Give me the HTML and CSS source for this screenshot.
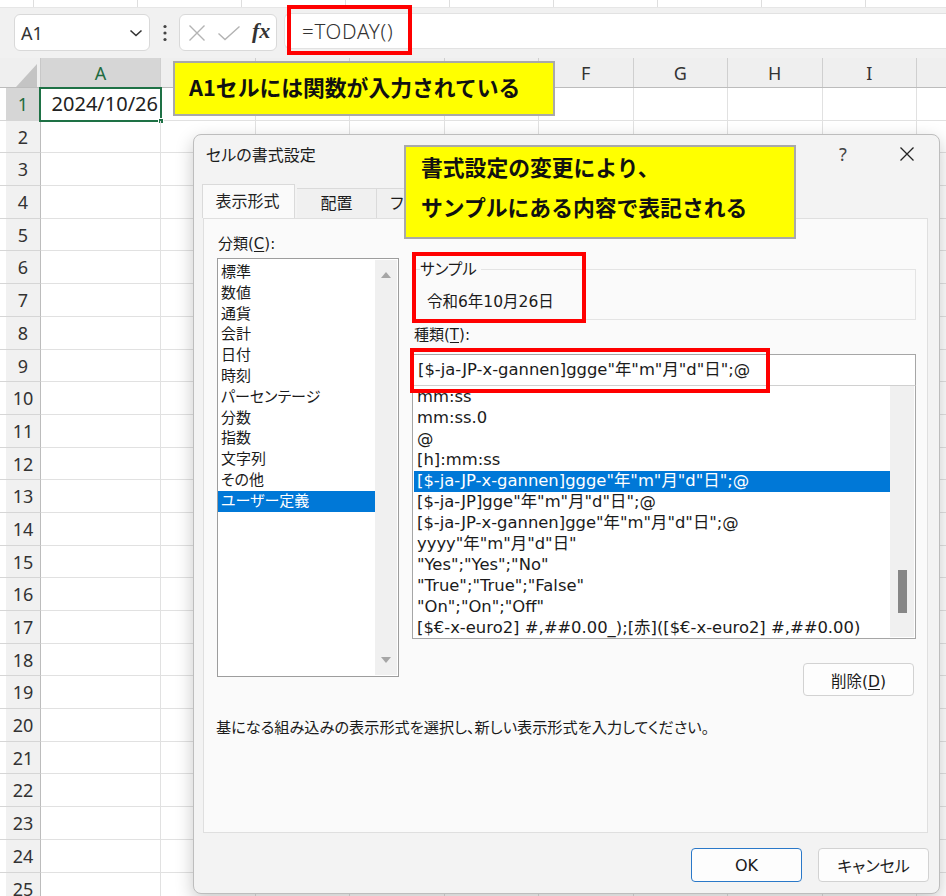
FILE: index.html
```html
<!DOCTYPE html>
<html lang="ja">
<head>
<meta charset="utf-8">
<title>セルの書式設定</title>
<link rel="stylesheet" href="styles.css">
</head>
<body>
<div class="app">
  <div class="topstrip"></div>
  <div class="fbar">
    <div class="namebox">
      <span>A1</span>
      <svg class="chev" width="14" height="8" viewBox="0 0 14 8"><path d="M1.5 1.5 L7 6.5 L12.5 1.5" fill="none" stroke="#333" stroke-width="1.6"/></svg>
    </div>
    <div class="dots">
      <svg width="4" height="18" viewBox="0 0 4 18"><circle cx="2" cy="2.5" r="1.6" fill="#444"/><circle cx="2" cy="9" r="1.6" fill="#444"/><circle cx="2" cy="15.5" r="1.6" fill="#444"/></svg>
    </div>
    <div class="fxgroup">
      <svg width="18" height="18" viewBox="0 0 18 18"><path d="M1.5 1.5 L16.5 16.5 M16.5 1.5 L1.5 16.5" stroke="#b3b3b3" stroke-width="1.4" fill="none"/></svg>
      <svg width="24" height="16" viewBox="0 0 24 16"><path d="M1.5 8.5 L8 14.5 L22.5 1.5" stroke="#b3b3b3" stroke-width="1.4" fill="none"/></svg>
      <span class="fx">fx</span>
    </div>
    <div class="finput">=TODAY()</div>
  </div>

  <div class="sheet">
    <div class="hrow">
      <div class="corner"><svg width="41" height="30" viewBox="0 0 41 30"><polygon points="16,29 37,6 37,29" fill="#c4c4c4"/></svg></div>
      <div class="ch ch-a sel">A</div>
      <div class="ch">B</div><div class="ch">C</div><div class="ch">D</div><div class="ch">E</div>
      <div class="ch">F</div><div class="ch">G</div><div class="ch">H</div><div class="ch">I</div><div class="ch">J</div>
    </div>
    <div class="row"><div class="rh sel">1</div><div class="ca"><div class="active">2024/10/26<span class="handle"></span></div></div><div class="rest"></div></div>
    <div class="row"><div class="rh">2</div><div class="ca"></div><div class="rest"></div></div>
    <div class="row"><div class="rh">3</div><div class="ca"></div><div class="rest"></div></div>
    <div class="row"><div class="rh">4</div><div class="ca"></div><div class="rest"></div></div>
    <div class="row"><div class="rh">5</div><div class="ca"></div><div class="rest"></div></div>
    <div class="row"><div class="rh">6</div><div class="ca"></div><div class="rest"></div></div>
    <div class="row"><div class="rh">7</div><div class="ca"></div><div class="rest"></div></div>
    <div class="row"><div class="rh">8</div><div class="ca"></div><div class="rest"></div></div>
    <div class="row"><div class="rh">9</div><div class="ca"></div><div class="rest"></div></div>
    <div class="row"><div class="rh">10</div><div class="ca"></div><div class="rest"></div></div>
    <div class="row"><div class="rh">11</div><div class="ca"></div><div class="rest"></div></div>
    <div class="row"><div class="rh">12</div><div class="ca"></div><div class="rest"></div></div>
    <div class="row"><div class="rh">13</div><div class="ca"></div><div class="rest"></div></div>
    <div class="row"><div class="rh">14</div><div class="ca"></div><div class="rest"></div></div>
    <div class="row"><div class="rh">15</div><div class="ca"></div><div class="rest"></div></div>
    <div class="row"><div class="rh">16</div><div class="ca"></div><div class="rest"></div></div>
    <div class="row"><div class="rh">17</div><div class="ca"></div><div class="rest"></div></div>
    <div class="row"><div class="rh">18</div><div class="ca"></div><div class="rest"></div></div>
    <div class="row"><div class="rh">19</div><div class="ca"></div><div class="rest"></div></div>
    <div class="row"><div class="rh">20</div><div class="ca"></div><div class="rest"></div></div>
    <div class="row"><div class="rh">21</div><div class="ca"></div><div class="rest"></div></div>
    <div class="row"><div class="rh">22</div><div class="ca"></div><div class="rest"></div></div>
    <div class="row"><div class="rh">23</div><div class="ca"></div><div class="rest"></div></div>
    <div class="row"><div class="rh">24</div><div class="ca"></div><div class="rest"></div></div>
    <div class="row"><div class="rh">25</div><div class="ca"></div><div class="rest"></div></div>
  </div>

  <div class="dialog">
    <div class="titlebar">
      <span class="title">セルの書式設定</span>
      <span class="help">?</span>
      <span class="close"><svg width="16" height="16" viewBox="0 0 16 16"><path d="M1.5 1.5 L14.5 14.5 M14.5 1.5 L1.5 14.5" stroke="#222" stroke-width="1.3" fill="none"/></svg></span>
    </div>
    <div class="tabs">
      <div class="tab active">表示形式</div>
      <div class="tab">配置</div>
      <div class="tab">フォント</div>
    </div>
    <div class="panel">
      <div class="cols">
        <div class="leftcol">
          <div class="label">分類(<u>C</u>):</div>
          <div class="list1">
            <div class="items">
              <div class="item">標準</div>
              <div class="item">数値</div>
              <div class="item">通貨</div>
              <div class="item">会計</div>
              <div class="item">日付</div>
              <div class="item">時刻</div>
              <div class="item">パーセンテージ</div>
              <div class="item">分数</div>
              <div class="item">指数</div>
              <div class="item">文字列</div>
              <div class="item">その他</div>
              <div class="item selected">ユーザー定義</div>
            </div>
            <div class="vscroll">
              <svg width="22" height="12" viewBox="0 0 22 12"><polygon points="6,10 16,10 11,4" fill="#a6a6a6"/></svg>
              <svg width="22" height="12" viewBox="0 0 22 12"><polygon points="6,2 16,2 11,8" fill="#a6a6a6"/></svg>
            </div>
          </div>
        </div>
        <div class="rightcol">
          <div class="sample">
            <span class="legend">サンプル</span>
            <div class="sample-value">令和6年10月26日</div>
          </div>
          <div class="label kind-label">種類(<u>T</u>):</div>
          <div class="kind-input">[$-ja-JP-x-gannen]ggge"年"m"月"d"日";@</div>
          <div class="list2">
            <div class="items2">
              <div class="item">mm:ss</div>
              <div class="item">mm:ss.0</div>
              <div class="item">@</div>
              <div class="item">[h]:mm:ss</div>
              <div class="item selected">[$-ja-JP-x-gannen]ggge"年"m"月"d"日";@</div>
              <div class="item">[$-ja-JP]gge"年"m"月"d"日";@</div>
              <div class="item">[$-ja-JP-x-gannen]gge"年"m"月"d"日";@</div>
              <div class="item">yyyy"年"m"月"d"日"</div>
              <div class="item">"Yes";"Yes";"No"</div>
              <div class="item">"True";"True";"False"</div>
              <div class="item">"On";"On";"Off"</div>
              <div class="item">[$€-x-euro2] #,##0.00_);[赤]([$€-x-euro2] #,##0.00)</div>
            </div>
            <div class="vscroll2"><div class="thumb"></div></div>
          </div>
          <div class="btnrow"><button class="btn">削除(<u>D</u>)</button></div>
        </div>
      </div>
      <div class="desc">基になる組み込みの表示形式を選択し、新しい表示形式を入力してください。</div>
    </div>
    <div class="footer">
      <button class="btn btn-wide primary">OK</button>
      <button class="btn btn-wide">キャンセル</button>
    </div>
  </div>

  <div class="note note1">A1セルには関数が入力されている</div>
  <div class="note note2">書式設定の変更により、<br>サンプルにある内容で表記される</div>

  <div class="mark mark-formula"></div>
  <div class="mark mark-sample"></div>
  <div class="mark mark-kind"></div>
</div>
</body>
</html>
```

FILE: styles.css
```css
* { box-sizing: border-box; }
body { margin: 0; background: #fff; }
.app {
  position: relative;
  width: 946px;
  height: 896px;
  overflow: hidden;
  background: #fff;
  font-family: "Noto Sans", "Noto Sans CJK JP", sans-serif;
  color: #222;
}

/* top strip */
.topstrip {
  height: 7px;
  background: repeating-linear-gradient(to right, #fff 0, #fff 33px, #dedede 33px, #dedede 34px, #fff 34px, #fff 104px);
}

/* formula bar */
.fbar {
  height: 51px;
  background: #f1f1f1;
  display: flex;
  align-items: flex-start;
  padding: 6px 0 0 14px;
  border-top: 1px solid #e6e6e6;
}
.namebox {
  width: 136px;
  height: 37px;
  background: #fff;
  border: 1px solid #d9d9d9;
  border-radius: 6px;
  display: flex;
  align-items: center;
  justify-content: space-between;
  padding: 0 6px 0 6px;
  font-size: 18px;
  color: #333;
}
.dots {
  width: 29px;
  height: 37px;
  display: flex;
  align-items: center;
  justify-content: center;
}
.fxgroup {
  width: 98px;
  height: 37px;
  background: #fff;
  border: 1px solid #d9d9d9;
  border-radius: 6px;
  display: flex;
  align-items: center;
  gap: 11px;
  padding-left: 8px;
}
.fx {
  font-family: "Liberation Serif", "DejaVu Serif", serif;
  font-style: italic;
  font-weight: bold;
  font-size: 22px;
  color: #333;
  margin-top: -4px;
}
.finput {
  flex: 1;
  margin-left: 7px;
  margin-top: -1px;
  height: 36px;
  background: #fff;
  border-radius: 6px 0 0 6px;
  border: 1px solid #e2e2e2;
  border-right: none;
  padding-left: 17px;
  font-size: 20.5px;
  letter-spacing: 0.7px;
  line-height: 34px;
  color: #333;
  font-weight: 300;
}

/* sheet */
.hrow {
  display: flex;
  height: 30px;
  background: #efefef;
  border-bottom: 1px solid #bcbcbc;
}
.corner { width: 41px; flex: none; border-right: 1px solid #c8c8c8; }
.corner svg { display: block; }
.ch {
  width: 94.5px;
  flex: none;
  border-right: 1px solid #cfcfcf;
  text-align: center;
  font-size: 18px;
  line-height: 30px;
  color: #333;
}
.ch-a { width: 120px; }
.ch.sel { background: #d6d6d6; color: #1e6b40; }
.row { display: flex; height: 32.7px; }
.rh {
  width: 41px;
  flex: none;
  background: linear-gradient(to right, #fff 0, #fff 6px, #f1f1f1 6px);
  border-right: 1px solid #bcbcbc;
  border-bottom: 1px solid #d6d6d6;
  padding-left: 6px;
  text-align: center;
  font-size: 18px;
  line-height: 32px;
  color: #333;
}
.rh.sel { background: linear-gradient(to right, #fff 0, #fff 6px, #d6d6d6 6px); color: #1e6b40; }
.ca {
  width: 120px;
  flex: none;
  position: relative;
  border-right: 1px solid #e1e1e1;
  border-bottom: 1px solid #e1e1e1;
}
.rest {
  flex: 1;
  border-bottom: 1px solid #e1e1e1;
  background: repeating-linear-gradient(to right, transparent 0, transparent 93.5px, #e1e1e1 93.5px, #e1e1e1 94.5px);
}
.active {
  position: absolute;
  left: -2px;
  top: -1px;
  right: -2px;
  bottom: -2px;
  border: 2px solid #1e7145;
  text-align: right;
  padding-right: 2px;
  font-size: 20px;
  line-height: 30px;
  color: #222;
}
.handle {
  position: absolute;
  right: -4px;
  bottom: -4px;
  width: 6px;
  height: 6px;
  background: #1e7145;
  border: 1px solid #fff;
}

/* dialog */
.dialog {
  position: absolute;
  left: 193px;
  top: 134px;
  width: 747px;
  height: 760px;
  background: #f3f3f3;
  border: 1px solid #bdbdbd;
  border-radius: 8px;
  box-shadow: 0 6px 18px rgba(0,0,0,0.22);
  display: flex;
  flex-direction: column;
  font-family: "DejaVu Sans", "Noto Sans CJK JP", sans-serif;
  font-feature-settings: "palt";
  color: #1b1b1b;
}
.titlebar {
  height: 38px;
  flex: none;
  display: flex;
  align-items: center;
  padding-left: 12px;
}
.title { font-family: "Noto Sans CJK JP", sans-serif; font-size: 16px; flex: 1; }
.help {
  width: 64px;
  text-align: center;
  font-family: "Noto Sans", sans-serif;
  font-size: 18px;
  color: #444;
}
.close { width: 64px; display: flex; justify-content: center; }
.tabs {
  margin-top: 12px;
  height: 33px;
  display: flex;
  align-items: flex-end;
  padding-left: 10px;
  flex: none;
}
.tab {
  width: 80px;
  height: 30px;
  background: #f0f0f0;
  border: 1px solid #dadada;
  border-left: none;
  border-bottom: none;
  text-align: center;
  font-size: 16px;
  line-height: 30px;
}
.tab.active {
  width: 93px;
  height: 34px;
  margin-bottom: -1px;
  position: relative;
  z-index: 1;
  background: #fafafa;
  border-left: 1px solid #dadada;
  line-height: 34px;
}
.panel {
  margin: 0 11px 0 9px;
  height: 615px;
  flex: none;
  background: #fafafa;
  border: 1px solid #dfdfdf;
}
.cols {
  display: grid;
  grid-template-columns: 182px 504px;
  column-gap: 13px;
  padding-left: 13px;
}
.label { font-size: 15px; line-height: 22px; }
.label u { text-underline-offset: 2px; }
.leftcol { padding-top: 14px; }
.leftcol .label { padding-left: 1px; }
.list1 {
  margin-top: 3px;
  height: 419px;
  background: #fff;
  border: 1px solid #9d9d9d;
  display: flex;
}
.items { flex: 1; padding-top: 3px; }
.item {
  height: 20.8px;
  line-height: 20.8px;
  font-size: 15px;
  padding-left: 3px;
  white-space: nowrap;
}
.item.selected { background: #0078d7; color: #fff; }
.vscroll {
  width: 22px;
  margin: 1px 1px 1px 0;
  background: #f0f0f0;
  display: flex;
  flex-direction: column;
  justify-content: space-between;
  padding: 8px 0;
}
.vscroll svg { display: block; }
.rightcol { padding-top: 50px; }
.sample {
  height: 51px;
  border: 1px solid #e4e4e4;
}
.legend {
  display: inline-block;
  margin-top: -10px;
  margin-left: 7px;
  padding-right: 4px;
  background: #fafafa;
  font-size: 15.5px;
  line-height: 20px;
  vertical-align: top;
}
.sample-value {
  margin-top: 2px;
  padding-left: 14px;
  font-size: 15.5px;
  line-height: 22px;
}
.kind-label { margin-top: 4px; padding-left: 2px; }
.kind-input {
  margin-top: 8px;
  margin-left: 1px;
  height: 32px;
  background: #fff;
  border: 1px solid #a6a6a6;
  border-bottom-color: #d0d0d0;
  padding-left: 4px;
  font-size: 16.4px;
  line-height: 30px;
  white-space: nowrap;
}
.list2 {
  height: 253px;
  background: #fff;
  border: 1px solid #a6a6a6;
  border-top: none;
  display: flex;
  width: 504px;
  overflow: hidden;
}
.items2 { flex: 1; padding: 1px 0 0 1px; }
.items2 .item { height: 21px; line-height: 20px; font-size: 16.4px; padding-left: 3px; }
.vscroll2 {
  width: 24px;
  background: #f0f0f0;
  margin: 0 1px 1px 0;
  padding-top: 184px;
  display: flex;
  justify-content: center;
}
.thumb { width: 9px; height: 43px; background: #878787; }
.btnrow { display: flex; justify-content: flex-end; margin-top: 24px; padding-right: 2px; }
.btn {
  width: 111px;
  height: 33px;
  background: #fdfdfd;
  border: 1px solid #d2d2d2;
  border-radius: 4px;
  font-family: "DejaVu Sans", "Noto Sans CJK JP", sans-serif;
  font-feature-settings: "palt";
  font-size: 15.5px;
  color: #1b1b1b;
  padding: 0;
}
.btn u { text-underline-offset: 2px; }
.desc {
  margin-top: 21px;
  padding-left: 12px;
  font-size: 15.2px;
  line-height: 22px;
}
.footer {
  display: flex;
  justify-content: flex-end;
  gap: 16px;
  padding-right: 10px;
  margin-top: 15px;
}
.btn-wide { height: 34px; font-size: 16px; }
.primary { border-color: #2a78c8; }

/* overlays */
.note {
  position: absolute;
  background: #ffff00;
  border: 2px solid #a9a9a9;
  font-family: "Noto Sans CJK JP", sans-serif;
  font-weight: bold;
  color: #111;
}
.note1 {
  left: 173px;
  top: 61px;
  width: 382px;
  height: 55px;
  padding-left: 14px;
  font-size: 21.8px;
  line-height: 47px;
}
.note2 {
  left: 404px;
  top: 145px;
  width: 392px;
  height: 94px;
  padding: 0 0 0 15px;
  font-size: 21.8px;
  line-height: 40px;
}
.mark {
  position: absolute;
  border: 4px solid #ff0000;
}
.mark-formula { left: 287px; top: 5px; width: 125px; height: 50px; }
.mark-sample { left: 412px; top: 252px; width: 174px; height: 71px; }
.mark-kind { left: 410px; top: 348px; width: 360px; height: 45px; }
```
